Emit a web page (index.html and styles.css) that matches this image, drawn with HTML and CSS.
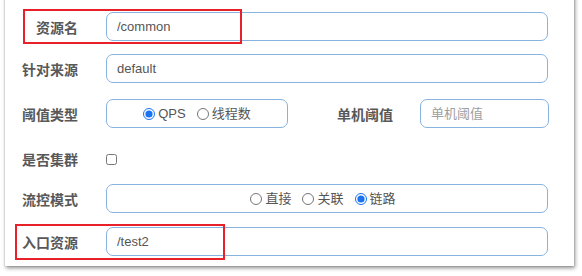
FILE: index.html
```html
<!DOCTYPE html>
<html lang="zh-CN">
<head>
<meta charset="utf-8">
<link rel="stylesheet" href="styles.css">
</head>
<body>
<div class="card">
  <form class="form">
    <div class="row r1">
      <label class="lbl">资源名</label>
      <input class="ctl wide" type="text" value="/common">
    </div>
    <div class="row r2">
      <label class="lbl">针对来源</label>
      <input class="ctl wide" type="text" value="default">
    </div>
    <div class="row r3">
      <label class="lbl">阈值类型</label>
      <div class="ctl radios small">
        <label class="opt"><input type="radio" name="grade" checked>QPS</label>
        <label class="opt"><input type="radio" name="grade">线程数</label>
      </div>
      <label class="lbl lbl2">单机阈值</label>
      <input class="ctl narrow" type="text" placeholder="单机阈值">
    </div>
    <div class="row r4">
      <label class="lbl">是否集群</label>
      <div class="chkwrap"><input type="checkbox" class="chk"></div>
    </div>
    <div class="row r5">
      <label class="lbl">流控模式</label>
      <div class="ctl radios wide">
        <label class="opt"><input type="radio" name="strategy">直接</label>
        <label class="opt"><input type="radio" name="strategy">关联</label>
        <label class="opt"><input type="radio" name="strategy" checked>链路</label>
      </div>
    </div>
    <div class="row r6">
      <label class="lbl">入口资源</label>
      <input class="ctl wide" type="text" value="/test2">
    </div>
  </form>
  <div class="mark mark1"></div>
  <div class="mark mark2"></div>
</div>
</body>
</html>
```
FILE: styles.css
```css
html, body {
  margin: 0;
  padding: 0;
  background: #ffffff;
}
body {
  width: 582px;
  height: 276px;
  overflow: hidden;
  font-family: "Liberation Sans", "Noto Sans CJK SC", sans-serif;
}
.card {
  position: relative;
  margin: -10px 0 0 5px;
  width: 569px;
  height: 276px;
  background: #fff;
  box-shadow: 1px 2px 4px rgba(0, 0, 0, 0.45), 0 0 1px rgba(0, 0, 0, 0.3);
}
.form {
  display: flex;
  flex-direction: column;
  padding-top: 22px;
}
.row {
  display: flex;
  align-items: flex-start;
  height: 29px;
}
.r2 { margin-top: 13px; }
.r3 { margin-top: 16px; }
.r4 { margin-top: 16px; }
.r5 { margin-top: 11px; }
.r6 { margin-top: 14px; }
.lbl {
  width: 73px;
  flex: none;
  text-align: right;
  font-size: 14px;
  font-weight: bold;
  color: #585858;
  line-height: 20px;
  padding-top: 6px;
  margin-right: 28px;
}
.lbl2 {
  width: 59px;
  margin-left: 46px;
  margin-right: 27px;
}
.ctl {
  box-sizing: border-box;
  height: 29px;
  border: 1px solid #86b3df;
  border-radius: 7px;
  background: #fff;
  font-family: "Liberation Sans", "Noto Sans CJK SC", sans-serif;
  font-size: 13px;
  color: #555;
  padding: 0 10px;
  outline: none;
  margin: 0;
}
.ctl::placeholder {
  color: #a0a0a0;
}
.wide { width: 442px; }
.small { width: 182px; }
.narrow { width: 129px; }
.radios {
  display: flex;
  align-items: center;
  justify-content: center;
  gap: 11px;
}
.r5 .radios { padding-left: 0; padding-right: 8px; }
.opt {
  display: flex;
  align-items: center;
  gap: 3px;
  line-height: 16px;
}
.opt input {
  width: 12px;
  height: 12px;
  margin: 0;
  accent-color: #1a73f0;
}
.chkwrap {
  height: 29px;
  display: flex;
  align-items: center;
}
.chk {
  width: 11px;
  height: 11px;
  margin: 1px 0 0 0;
}
.mark {
  position: absolute;
  border: 2px solid #e8202a;
  box-sizing: border-box;
}
.mark1 {
  left: 18px;
  top: 19px;
  width: 219px;
  height: 35px;
}
.mark2 {
  left: 10px;
  top: 234px;
  width: 210px;
  height: 36px;
}
```
